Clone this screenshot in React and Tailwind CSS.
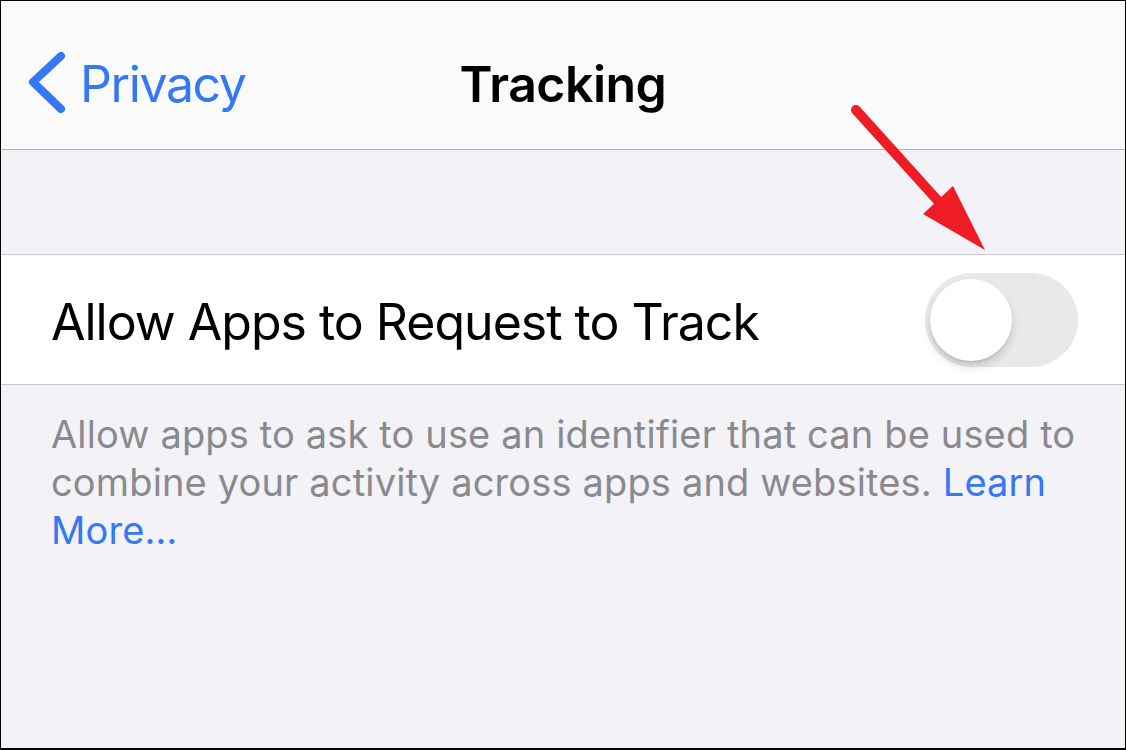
export default function App() {
  return (
    <div
      className="relative w-[1126px] h-[750px] overflow-hidden border-t border-l border-r border-b-2 border-black bg-[#f2f2f7] flex flex-col"
      style={{ fontFamily: 'Inter, "Noto Sans", sans-serif' }}
    >
      {/* nav bar */}
      <div className="relative h-[149px] shrink-0 bg-[#fafafa] border-b border-[#b2b2b2] flex items-center pt-[17px]">
        <div className="flex items-center text-[#3478f6] pl-[27px]">
          <svg width="40" height="64" viewBox="0 0 40 64" className="shrink-0">
            <path d="M33 4 L5 30 L33 57" fill="none" stroke="currentColor" strokeWidth="8" strokeLinecap="round" strokeLinejoin="round" />
          </svg>
          <span className="ml-[12px] text-[50px] leading-none tracking-[-1.4px]">Privacy</span>
        </div>
        <div className="absolute left-0 right-0 top-[17px] bottom-0 flex items-center justify-center">
          <span className="text-[50px] leading-none font-semibold tracking-[-0.5px] text-black">Tracking</span>
        </div>
      </div>

      <div className="h-[105px] shrink-0 border-b border-[#c8c7cc]" />

      {/* row */}
      <div className="h-[130px] shrink-0 bg-white border-b border-[#c8c7cc] flex items-center justify-between pl-[50px] pr-[47px]">
        <span className="text-[50px] leading-none text-black tracking-[-1px] pt-[4px]">Allow Apps to Request to Track</span>
        <div className="relative w-[153px] h-[94px] rounded-full bg-[#e9e9eb]">
          <div className="absolute left-[5px] top-[6px] w-[82px] h-[82px] rounded-full bg-white shadow-[0_6px_10px_rgba(0,0,0,0.14),0_2px_2px_rgba(0,0,0,0.08)]" />
        </div>
      </div>

      {/* footer */}
      <div className="pl-[50px] pr-[40px] pt-[25px] text-[38px] leading-[48px] tracking-[0.15px] text-[#8a8a8e]">
        Allow apps to ask to use an identifier that can be used to combine your activity across apps and websites.{' '}
        <span className="text-[#3478f6]">Learn More…</span>
      </div>

      {/* annotation arrow */}
      <svg className="absolute left-0 top-0 pointer-events-none" width="1126" height="750">
        <line x1="855" y1="109" x2="948" y2="212" stroke="#ee1c25" strokeWidth="10" strokeLinecap="round" />
        <polygon points="922,213 952,185 984,249" fill="#ee1c25" />
      </svg>
    </div>
  )
}
